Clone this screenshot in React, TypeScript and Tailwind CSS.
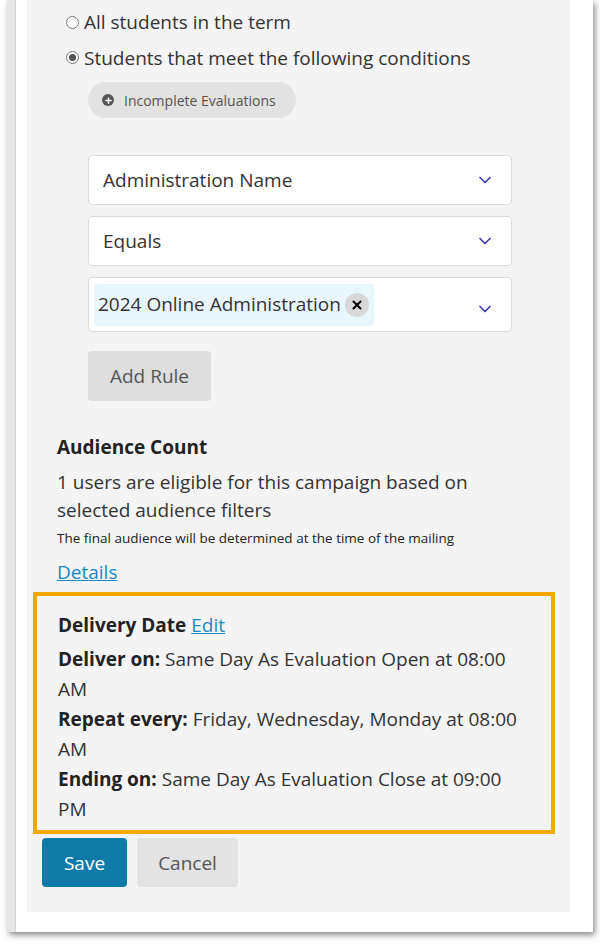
import { ChevronDown, X, Plus } from "lucide-react";

const font = { fontFamily: '"Open Sans", "Noto Sans", sans-serif' };

function Select({ label }: { label: string }) {
  return (
    <div className="flex h-[50px] items-center justify-between rounded border border-[#dcdcdc] bg-white pl-[14px] pr-[16px]">
      <span className="text-[19px] text-[#333]">{label}</span>
      <ChevronDown className="h-5 w-5 text-[#3b3bb0]" strokeWidth={2} />
    </div>
  );
}

export default function App() {
  return (
    <div className="h-[945px] w-[600px] bg-white" style={font}>
      <div className="ml-[7px] h-[932px] w-[586px] bg-white shadow-[2px_3px_6px_rgba(0,0,0,0.45)]">
        <div className="flex h-full">
          <div className="w-[9px] shrink-0 bg-[#e6e6e6] border-r border-[#d4d4d4]" />
          <div className="ml-[11px] h-[912px] w-[543px] bg-[#f4f4f4] pl-[39px] text-[#333]">
            <div className="flex flex-col gap-[7px] pt-[8px] text-[19px]">
              <label className="flex items-center gap-[5px]">
                <span className="h-[13px] w-[13px] rounded-full border border-[#777] bg-white" />
                <span>All students in the term</span>
              </label>
              <label className="flex items-center gap-[5px]">
                <span className="flex h-[13px] w-[13px] items-center justify-center rounded-full border border-[#777] bg-white">
                  <span className="h-[7px] w-[7px] rounded-full bg-[#555]" />
                </span>
                <span>Students that meet the following conditions</span>
              </label>
            </div>
            <div className="ml-[22px] mt-[10px] w-[424px]">
              <div className="inline-flex h-[36px] items-center gap-[10px] rounded-full bg-[#e2e2e2] pl-[14px] pr-[20px] text-[14px] text-[#555]">
                <span className="flex h-[12px] w-[12px] items-center justify-center rounded-full bg-[#555]">
                  <Plus className="h-[9px] w-[9px] text-white" strokeWidth={4} />
                </span>
                Incomplete Evaluations
              </div>
              <div className="mt-[37px] flex flex-col gap-[11px]">
                <Select label="Administration Name" />
                <Select label="Equals" />
                <div className="flex h-[55px] items-center justify-between rounded border border-[#dcdcdc] bg-white pl-[5px] pr-[16px]">
                  <span className="flex h-[42px] items-center gap-[4px] rounded bg-[#eaf6fd] pl-[4px] pr-[5px] text-[19px] text-[#333]">
                    2024 Online Administration
                    <span className="flex h-[24px] w-[24px] items-center justify-center rounded-full bg-[#d8d8d8]">
                      <X className="h-[14px] w-[14px] text-black" strokeWidth={3.5} />
                    </span>
                  </span>
                  <ChevronDown className="mt-[8px] h-5 w-5 text-[#3b3bb0]" strokeWidth={2} />
                </div>
              </div>
              <button className="mt-[19px] h-[50px] w-[123px] rounded bg-[#dedede] text-[19px] text-[#555]">
                Add Rule
              </button>
            </div>
            <div className="-ml-[9px] mt-[32px] pr-[40px]">
              <div className="text-[19px] font-bold text-[#222]">Audience Count</div>
              <div className="mt-[6px] text-[19px] leading-[28px]">
                1 users are eligible for this campaign based on selected audience filters
              </div>
              <div className="mt-[4px] text-[13.5px] text-[#222]">
                The final audience will be determined at the time of the mailing
              </div>
              <a className="mt-[10px] inline-block text-[19px] text-[#1a8ac0] underline">Details</a>
            </div>
            <div className="-ml-[33px] mt-[6px] w-[522px] border-[4px] border-[#f5a800] pb-[6px] pl-[21px] pr-[30px] pt-[14px] text-[19px] leading-[30px]">
              <div className="mb-[4px]">
                <span className="font-bold text-[#222]">Delivery Date</span>{" "}
                <a className="text-[#1a8ac0] underline">Edit</a>
              </div>
              <div><b className="text-[#222]">Deliver on:</b> Same Day As Evaluation Open at 08:00 AM</div>
              <div><b className="text-[#222]">Repeat every:</b> Friday, Wednesday, Monday at 08:00 AM</div>
              <div><b className="text-[#222]">Ending on:</b> Same Day As Evaluation Close at 09:00 PM</div>
            </div>
            <div className="-ml-[24px] mt-[4px] flex gap-[10px]">
              <button className="h-[49px] w-[85px] rounded bg-[#0e7aa8] text-[19px] text-white">Save</button>
              <button className="h-[49px] w-[101px] rounded bg-[#e3e3e3] text-[19px] text-[#555]">Cancel</button>
            </div>
          </div>
        </div>
      </div>
    </div>
  );
}
